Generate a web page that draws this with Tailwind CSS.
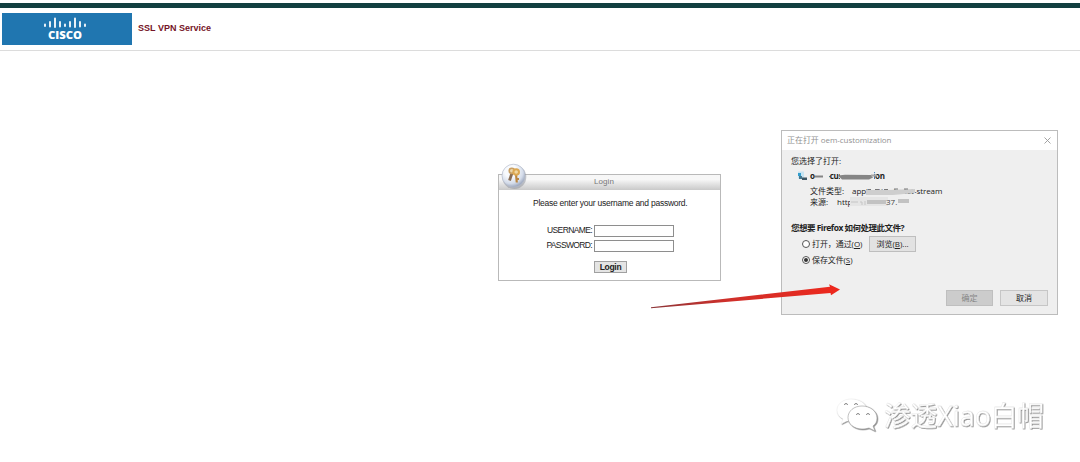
<!DOCTYPE html>
<html lang="zh-CN">
<head>
<meta charset="utf-8">
<title>SSL VPN Service</title>
<script src="https://cdn.jsdelivr.net/npm/@tailwindcss/browser@4"></script>
</head>
<body class="relative h-[462px] w-[1080px] overflow-hidden bg-white font-['Liberation_Sans','Noto_Sans_CJK_SC',sans-serif] whitespace-nowrap text-[#222]">
<header class="h-[51px] border-b border-[#dcdcdc] pt-[3px]">
  <div class="h-[5px] bg-[#123f40]"></div>
  <div class="flex pt-[5px] pl-[2px]">
    <div class="flex h-[32px] w-[130px] bg-[#2076b0]">
      <svg class="h-[32px] w-[130px]" viewBox="0 0 130 32">
        <g stroke="#fff" stroke-width="1.8" stroke-linecap="round">
          <path d="M43 11.5v1.5M48 9v4.5M53 5.500v8.500M58 9v4.500M63 11.500v1.500M68 9v4.500M73 5.500v8.500M78 9v4.500M83 11.500v1.500"/>
        </g>
        <text x="46" y="26.400" textLength="34" lengthAdjust="spacingAndGlyphs" fill="#fff" font-family="Open Sans, sans-serif" font-weight="800" font-size="10.500">CISCO</text>
      </svg>
    </div>
    <h1 class="ml-[6px] pt-[9px] text-[9px] leading-[13px] font-bold tracking-[0.01px] text-[#751427]">SSL VPN Service</h1>
  </div>
</header>
<main class="flex h-[341px] items-start pl-[498px]">
  <section class="relative mt-[123px] h-[107px] w-[223px] border border-[#b9b9b9] bg-white text-[8.500px]">
    <div class="h-[15px] bg-linear-to-b from-[#f7f7f7] from-30% to-[#c9c9c9] pr-[11px] text-center text-[8px] leading-[14px] text-[#777]"><span class="tracking-[0.05px]">Login</span></div>
    <p class="mt-[8px] pl-[34px] text-[8.500px] leading-[11px] tracking-[-0.25px]">Please enter your username and password.</p>
    <form class="mt-[15px] flex flex-col gap-[2px]">
      <label class="flex h-[13px] items-center"><span class="w-[93px] text-right tracking-[-0.62px]">USERNAME:</span><input class="ml-[2px] h-[12px] w-[80px] border border-[#8e8e8e] bg-white"></label>
      <label class="flex h-[13px] items-center"><span class="w-[93px] text-right tracking-[-0.64px]">PASSWORD:</span><input type="password" class="ml-[2px] h-[12px] w-[80px] border border-[#8e8e8e] bg-white"></label>
      <button type="button" class="mt-[7px] ml-[95px] h-[12px] w-[33px] border border-[#a0a0a0] bg-[#e4e4e4] text-[8.500px] leading-[10px] font-bold tracking-[-0.3px]">Login</button>
    </form>
    <svg class="absolute -top-[12px] left-[2px] h-[27px] w-[27px]" viewBox="0 0 27 27">
      <defs><radialGradient id="badge" cx=".38" cy=".3" r=".75"><stop offset=".35" stop-color="#f8fafd"/><stop offset=".72" stop-color="#d3dbe9"/><stop offset="1" stop-color="#8e99b1"/></radialGradient></defs>
      <circle cx="13.300" cy="14" r="12" fill="#8b8f99" opacity=".5"/>
      <circle cx="12.500" cy="12.700" r="11.500" fill="url(#badge)" stroke="#b4bccb" stroke-width=".7"/>
      <path d="M11 10 8.500 17.500" stroke="#886d55" stroke-width="2.800"/>
      <path d="M15 11 15.800 19.500M15.500 16h2.500" stroke="#bb8640" stroke-width="2.200"/>
      <circle cx="10.800" cy="7.800" r="2.600" fill="#ead5aa" stroke="#c9a064" stroke-width="1.600"/>
      <circle cx="15.200" cy="9" r="2.800" fill="#f1d7a0" stroke="#dca852" stroke-width="2"/>
    </svg>
  </section>

  <section class="mt-[79px] ml-[60px] h-[185px] w-[277px] border border-[#bcbcbc] bg-[#efefef] font-['Open_Sans','Noto_Sans_CJK_SC',sans-serif] text-[8px]">
    <div class="flex h-[19px] items-center justify-between bg-white pr-[6px] pb-[1px] pl-[5px] text-[#929292]">
      <span class="tracking-[-0.06px]">正在打开 oem-customization</span>
      <svg class="h-[7px] w-[7px]" viewBox="0 0 7 7"><path d="m.5.5 6 6m0-6-6 6" stroke="#999" stroke-width=".9"/></svg>
    </div>
    <p class="mt-[5px] pl-[9px] leading-[12px]">您选择了打开:</p>
    <div class="mt-[3px] flex h-[12px] items-center pl-[15px]">
      <svg class="h-[10px] w-[12px]" viewBox="0 0 12 10"><path d="M1 .5h6v7H1z" fill="#c7e4f2"/><path d="M1 2h3v3H1z" fill="#329dcc"/><path d="M2 5h3v3H2z" fill="#46788f"/><path d="M5 6.500h5V9H5z" fill="#3e5663"/></svg>
      <span class="relative ml-[1px] block h-[12px] w-[78px]">
        <span class="absolute top-0 left-0 text-[8px] leading-[12px] font-bold tracking-[-0.12px]">oem-customization</span>
        <svg class="absolute top-0 left-0 h-[12px] w-[78px]" viewBox="0 0 78 12"><path d="M5 2h14v8H5zM30 1h34v10H30z" fill="#efefef"/><path d="M5 5.500h8v2H5z" fill="#858585"/><path d="m28 5.500 7-.8 26 .3 2 2.500-4 2H32z" fill="#858585"/><path d="M61 4.500h6v2h-6z" fill="#a5a5a5"/></svg>
      </span>
    </div>
    <div class="mt-[3px] flex h-[11px] items-center pl-[28px] leading-[11px]">
      <span class="w-[42px]">文件类型:</span>
      <span class="relative block w-[94px] tracking-[-0.06px]">application/octet-stream
        <svg class="absolute top-[1px] left-[14px] h-[10px] w-[51px]" viewBox="0 0 51 10"><path d="M0 4h20l29-1v4l-22 2H0z" fill="#cecece"/><path d="M2 3.500h3m4 0h4m5 0h4m6-.5h4m6 0h4" stroke="#777"/></svg>
      </span>
    </div>
    <div class="flex h-[11px] items-center pl-[28px] leading-[11px]">
      <span class="w-[27px]">来源:</span>
      <span class="relative block w-[76px]">https://...
        <svg class="absolute top-0 left-[13px] h-[11px] w-[62px]" viewBox="0 0 62 11"><path d="M0 1h38v9H0z" fill="#e5e5e5"/><path d="M1 6h7m2 0h2v3m3-4v4" fill="none" stroke="#c5c5c5"/><path d="M17 4h19v4H17zM48 3h11v4H48z" fill="#c2c2c2"/></svg>
        <span class="absolute top-0 left-[49px] text-[#444]">37.</span>
      </span>
    </div>
    <p class="mt-[15px] pl-[9px] text-[8.500px] leading-[12px] font-bold"><span class="tracking-[-0.5px]">您想要 Firefox 如何处理此文件?</span></p>
    <div class="mt-[2px] flex h-[16px] items-center pl-[20px]">
      <span class="h-[8px] w-[8px] rounded-full border border-[#555] bg-white"></span>
      <span class="ml-[2px] w-[57px] tracking-[-0.08px]">打开，通过(<u>O</u>)</span>
      <button class="h-[16px] w-[47px] border border-[#bebebe] bg-[#e2e2e2] text-[8px] leading-[14px]">浏览(<u>B</u>)...</button>
    </div>
    <div class="mt-[1px] flex h-[13px] items-center pl-[20px]">
      <span class="flex h-[8px] w-[8px] items-center justify-center rounded-full border border-[#555] bg-white"><i class="h-[4px] w-[4px] rounded-full bg-[#333]"></i></span>
      <span class="ml-[2px] tracking-[-0.1px]">保存文件(<u>S</u>)</span>
    </div>
    <div class="mt-[24px] flex justify-end gap-[7px] pr-[9px]">
      <button class="h-[16px] w-[47px] border border-[#bfbfbf] bg-[#cccccc] text-[8px] leading-[14px] text-[#858585]">确定</button>
      <button class="h-[16px] w-[48px] border border-[#c6c6c6] bg-[#e4e4e4] text-[8px] leading-[14px]">取消</button>
    </div>
  </section>
</main>
<footer class="pl-[834px]">
  <svg class="h-[48px] w-[220px]" viewBox="0 0 220 48">
    <defs><filter id="relief" x="-5%" y="-20%" width="110%" height="140%"><feDropShadow dx=".8" dy=".8" stdDeviation=".4" flood-color="#777" flood-opacity=".9"/></filter></defs>
    <g filter="url(#relief)" fill="#fff" stroke="#e2e2e2" stroke-width=".3">
      <path d="M17 7C9 7 3 12 3 18c0 4 2 7 6 9l-2 5 6-3c10 2 20-3 20-11 0-6-7-11-16-11z"/>
      <path d="M28 14c-8 0-14 5-14 11.500S20 37 28 37c3 0 5-.5 7-1l6 3-2-5c3-2 4-5 4-8 0-7-7-12-15-12z" stroke="#999" stroke-width=".6"/>
      <g fill="none" stroke="#888" stroke-width="1"><path d="M10.500 13a1.500 1.500 0 0 1 3 0M20.500 13a1.500 1.500 0 0 1 3 0M22.500 23a1.500 1.500 0 0 1 3 0M32.500 23a1.500 1.500 0 0 1 3 0"/></g>
      <text x="50" y="34" font-family="Noto Sans, Noto Sans CJK SC, sans-serif" font-size="27" textLength="160" lengthAdjust="spacingAndGlyphs">渗透Xiao白帽</text>
    </g>
  </svg>
</footer>
<svg class="absolute top-[280px] left-[648px] h-[32px] w-[196px]" viewBox="0 0 196 32">
  <defs><linearGradient id="pointer"><stop stop-color="#8b3438"/><stop offset=".4" stop-color="#cf302b"/><stop offset="1" stop-color="#ee281d"/></linearGradient></defs>
  <path d="M3 27.300 182 6.700 181 4.300 192 9.500 183 15.300 182.500 13 3 28.300z" fill="url(#pointer)"/>
</svg>
</body>
</html>
